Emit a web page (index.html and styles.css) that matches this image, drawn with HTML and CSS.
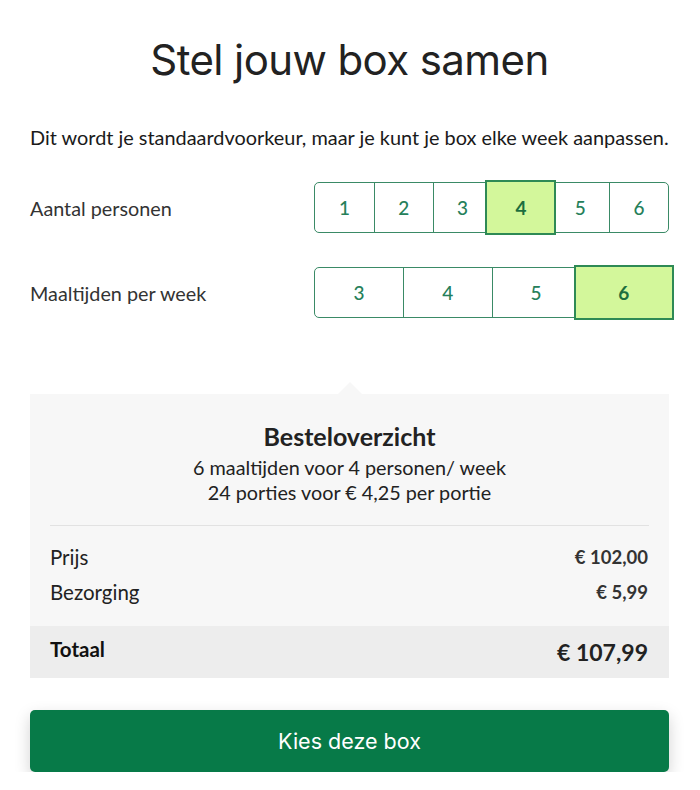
FILE: index.html
```html
<!DOCTYPE html>
<html lang="nl">
<head>
    <meta charset="UTF-8">
    <meta name="viewport" content="width=device-width, initial-scale=1.0">
    <title>Stel jouw box samen</title>
    <link rel="stylesheet" href="styles.css">
</head>
<body>
    <div class="container">
        <h1>Stel jouw box samen</h1>
        <p class="intro">Dit wordt je standaardvoorkeur, maar je kunt je box elke week aanpassen.</p>

        <div class="option-row">
            <span class="option-label">Aantal personen</span>
            <div class="segments six">
                <button class="segment">1</button>
                <button class="segment">2</button>
                <button class="segment">3</button>
                <button class="segment selected">4</button>
                <button class="segment">5</button>
                <button class="segment">6</button>
            </div>
        </div>

        <div class="option-row">
            <span class="option-label">Maaltijden per week</span>
            <div class="segments four">
                <button class="segment">3</button>
                <button class="segment">4</button>
                <button class="segment">5</button>
                <button class="segment selected">6</button>
            </div>
        </div>

        <div class="summary">
            <div class="summary-head">
                <h2>Besteloverzicht</h2>
                <p>6 maaltijden voor 4 personen/ week</p>
                <p>24 porties voor € 4,25 per portie</p>
            </div>
            <div class="summary-lines">
                <div class="line">
                    <span>Prijs</span>
                    <span class="amount">€ 102,00</span>
                </div>
                <div class="line">
                    <span>Bezorging</span>
                    <span class="amount">€ 5,99</span>
                </div>
            </div>
            <div class="total">
                <span class="total-label">Totaal</span>
                <span class="total-amount">€ 107,99</span>
            </div>
        </div>

        <button class="choose-button">Kies deze box</button>
    </div>
</body>
</html>
```

FILE: styles.css
```css
body, html {
    margin: 0;
    padding: 0;
    font-family: "Lato", "Noto Sans", sans-serif;
    background-color: #fff;
    color: #222;
}

.container {
    padding: 0 31px 0 30px;
}

h1 {
    font-family: "Inter", "Liberation Sans", sans-serif;
    font-weight: 400;
    font-size: 42px;
    line-height: 50px;
    letter-spacing: -0.6px;
    text-align: center;
    color: #222;
    margin: 35px 0 0;
}

.intro {
    font-size: 19.9px;
    line-height: 24px;
    margin: 40px 0 33px;
    color: #1a1a1a;
}

.option-row {
    display: flex;
    align-items: center;
    justify-content: space-between;
    margin-bottom: 34px;
}

.option-label {
    font-size: 19.8px;
    color: #333;
}

.segments {
    display: grid;
    width: 353px;
    height: 49px;
    border: 1px solid #3a8a66;
    border-radius: 5px;
}

.segments.six {
    grid-template-columns: repeat(6, 1fr);
}

.segments.four {
    grid-template-columns: repeat(4, 1fr);
}

.segment {
    font-family: "Lato", "Noto Sans", sans-serif;
    font-size: 19px;
    font-weight: 500;
    color: #25805a;
    background: none;
    border: none;
    border-left: 1px solid #3a8a66;
    padding: 0;
    cursor: pointer;
}

.segment:first-child {
    border-left: none;
}

.segment.selected {
    position: relative;
    z-index: 1;
    margin: -3px -6px -3px -6px;
    background-color: #d3f79b;
    border: 2px solid #2e8a55;
    font-weight: 700;
    color: #1c6e3e;
}

.summary {
    position: relative;
    margin-top: 76px;
    background-color: #f7f7f7;
}

.summary::before {
    content: "";
    position: absolute;
    top: -12px;
    left: 308px;
    border-left: 12px solid transparent;
    border-right: 12px solid transparent;
    border-bottom: 12px solid #f7f7f7;
}

.summary-head {
    text-align: center;
    padding: 28px 20px 20px;
    margin: 0 20px;
    border-bottom: 1px solid #e2e2e2;
}

.summary-head h2 {
    font-size: 25px;
    font-weight: 700;
    line-height: 29px;
    margin: 0 0 4px;
    color: #222;
}

.summary-head p {
    font-size: 19.8px;
    line-height: 25px;
    margin: 0;
    color: #222;
}

.summary-lines {
    padding: 19px 21px 21px 20px;
}

.line {
    display: flex;
    justify-content: space-between;
    align-items: center;
    font-size: 20.5px;
    line-height: 25px;
    margin-bottom: 10px;
}

.line:last-child {
    margin-bottom: 0;
}

.amount {
    font-size: 18.5px;
    font-weight: 700;
    color: #333;
}

.total {
    display: flex;
    justify-content: space-between;
    align-items: center;
    height: 52px;
    padding: 0 21px 0 20px;
    background-color: #ededed;
}

.total-label {
    font-size: 20.5px;
    font-weight: 700;
    margin-bottom: 7px;
    color: #111;
}

.total-amount {
    font-size: 23px;
    font-weight: 700;
    color: #222;
}

.choose-button {
    display: block;
    width: 100%;
    height: 62px;
    margin-top: 32px;
    font-family: "Inter", "Liberation Sans", sans-serif;
    font-size: 21.5px;
    color: #fff;
    background-color: #077a48;
    border: none;
    border-radius: 5px;
    box-shadow: 0 6px 16px rgba(0, 0, 0, 0.18);
    cursor: pointer;
}
```
